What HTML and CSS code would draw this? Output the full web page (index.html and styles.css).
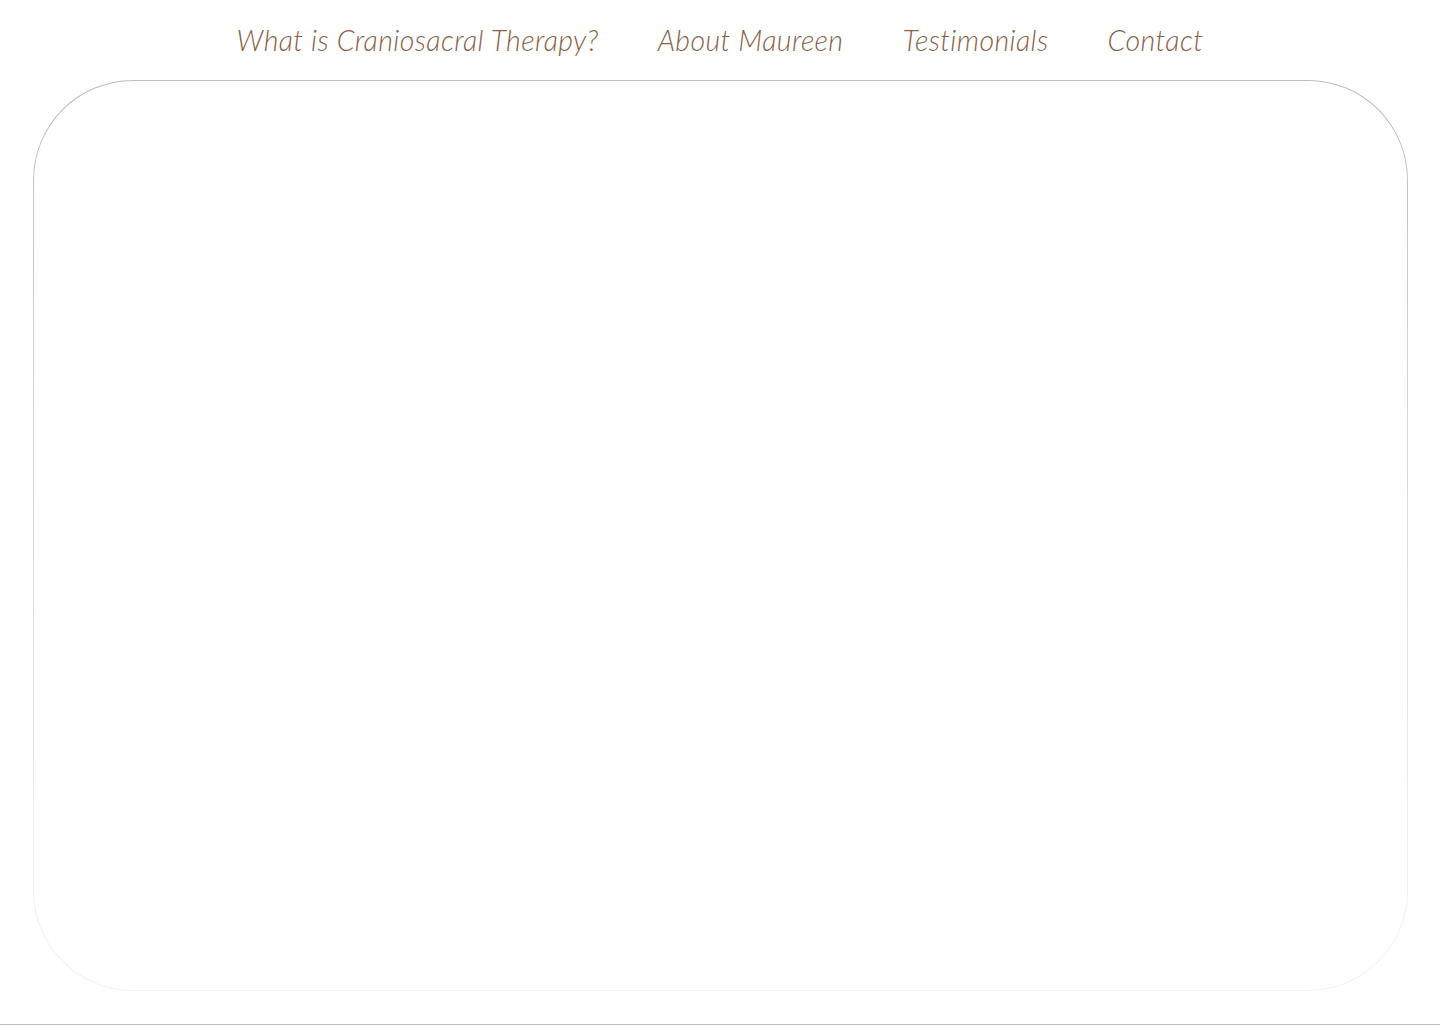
FILE: index.html
```html
<!DOCTYPE html>
<html lang="en">
<head>
<meta charset="utf-8">
<title>Craniosacral Therapy</title>
<link rel="stylesheet" href="styles.css">
</head>
<body>
<header class="site-header">
  <nav class="main-nav">
    <a class="nav-link" href="#">What is Craniosacral Therapy?</a>
    <a class="nav-link" href="#">About Maureen</a>
    <a class="nav-link" href="#">Testimonials</a>
    <a class="nav-link" href="#">Contact</a>
  </nav>
</header>
<main class="content">
  <div class="frame">
    <div class="frame-inner"></div>
  </div>
</main>
<footer class="page-rule"></footer>
</body>
</html>
```
FILE: styles.css
```css
html, body {
  margin: 0;
  padding: 0;
  background: #ffffff;
}
body {
  height: 1027px;
  display: flex;
  flex-direction: column;
  font-family: "Lato", "Open Sans", sans-serif;
}
.site-header {
  height: 80px;
  display: flex;
  justify-content: center;
}
.main-nav {
  display: flex;
  gap: 59px;
  padding-top: 22px;
}
.nav-link {
  color: #8a5f47;
  text-decoration: none;
  font-style: italic;
  font-weight: 300;
  font-size: 28.5px;
  letter-spacing: 0.4px;
  line-height: 36px;
}
.content {
  padding: 0 32px 0 33px;
}
.frame {
  height: 909px;
  border-radius: 100px;
  padding: 1px;
  background: linear-gradient(#bcbcbc 0%, #d8d8d8 40%, #ececec 80%, #f3f3f3 100%);
}
.frame-inner {
  height: 100%;
  border-radius: 99px;
  background: #ffffff;
}
.page-rule {
  margin-top: auto;
  height: 1px;
  margin-bottom: 2px;
  background: #bdbdbd;
}
```
